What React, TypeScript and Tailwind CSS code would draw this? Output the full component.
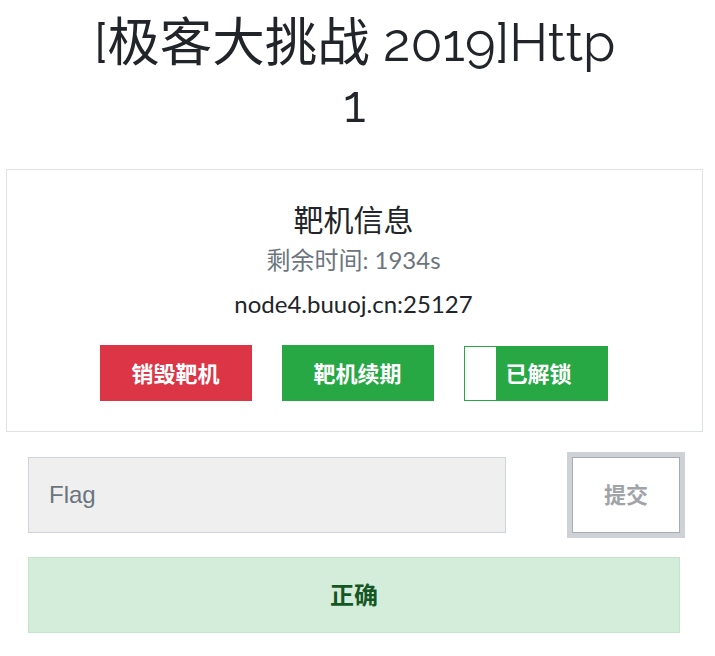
import React from "react";

export default function App() {
  const cjk = "font-['Lato','Noto_Sans_CJK_SC',sans-serif]";
  return (
    <div className={`w-[715px] min-h-[656px] bg-white ${cjk} text-[#212529]`}>
      <h1 className="w-[709px] pt-[12px] text-center text-[52.5px] leading-[61px] font-normal font-['Raleway','Lato','Noto_Sans_CJK_SC',sans-serif] text-[#212529]">
        <div>[极客大挑战 2019]Http</div>
        <div>1</div>
      </h1>
      <div className="ml-[6px] w-[697px] h-[263px] mt-[35px] border border-[#dee2e6] pt-[31px] pr-[2px] flex flex-col items-center">
        <h3 className="text-[30px] leading-[36px] text-[#212529]">靶机信息</h3>
        <p className="mt-[8px] text-[24px] leading-[30px] text-[#6c757d]">剩余时间: 1934s</p>
        <p className="mt-[14px] text-[24px] leading-[30px] text-[#212529]">node4.buuoj.cn:25127</p>
        <div className="mt-[26px] flex gap-[30px] items-start">
          <button className="w-[152px] h-[56px] bg-[#dc3545] text-white font-bold text-[22px]">销毁靶机</button>
          <button className="w-[152px] h-[56px] bg-[#28a745] text-white font-bold text-[22px]">靶机续期</button>
          <div className="relative mt-[1px] w-[144px] h-[55px] border border-[#28a745] bg-[#28a745] flex items-center justify-center pl-[6px] text-white font-bold text-[22px]">
            <span className="absolute left-0 top-0 bottom-0 w-[31px] bg-white"></span>
            已解锁
          </div>
        </div>
      </div>
      <div className="mt-[20px] pl-[28px] flex items-center">
        <div className="w-[478px] h-[76px] bg-[#efefef] border border-[#ced4da] flex items-center px-[20px] text-[24px] text-[#6c757d] font-['Liberation_Sans',Arial,sans-serif]">Flag</div>
        <div className="ml-[61px] w-[118px] h-[86px] border-[5px] border-[#ced1d5] flex">
          <div className="flex-1 border border-[#a9adb3] bg-white flex items-center justify-center text-[22px] font-bold text-[#a0a4a8] font-['Liberation_Sans','Noto_Sans_CJK_SC',sans-serif]">提交</div>
        </div>
      </div>
      <div className="mt-[19px] ml-[28px] w-[652px] h-[76px] bg-[#d4edda] border border-[#c3e6cb] flex items-center justify-center text-[24px] font-bold text-[#155724]">
        正确
      </div>
    </div>
  );
}
